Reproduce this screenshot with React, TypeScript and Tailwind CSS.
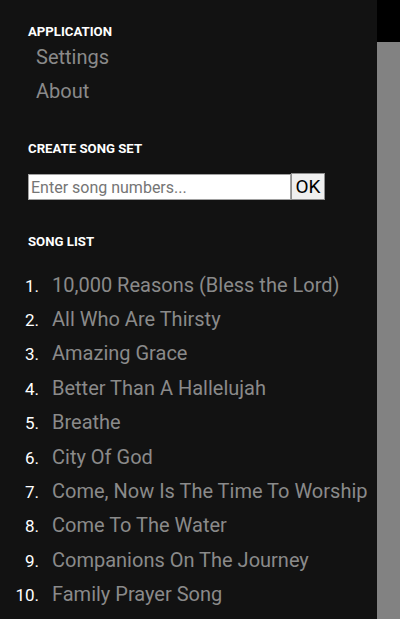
import React from 'react';

const songs = [
  '10,000 Reasons (Bless the Lord)',
  'All Who Are Thirsty',
  'Amazing Grace',
  'Better Than A Hallelujah',
  'Breathe',
  'City Of God',
  'Come, Now Is The Time To Worship',
  'Come To The Water',
  'Companions On The Journey',
  'Family Prayer Song',
];

function SectionTitle({ children }: { children: React.ReactNode }) {
  return <h2 className="text-[13.2px] leading-[16px] font-bold text-white uppercase">{children}</h2>;
}

export default function App() {
  return (
    <div className="flex h-[619px] w-[400px] overflow-hidden bg-black font-['Roboto',sans-serif]">
      {/* Drawer */}
      <aside className="w-[377px] h-full shrink-0 overflow-hidden bg-[#121212] pl-[28px] pt-[24px]">
        <SectionTitle>Application</SectionTitle>
        <nav className="pl-[8px] text-[20px] leading-[34px] text-[#8a8a8a]">
          <div>Settings</div>
          <div>About</div>
        </nav>

        <div className="mt-[33px]">
          <SectionTitle>Create Song Set</SectionTitle>
        </div>
        <div className="mt-[16px] flex items-end">
          <input
            type="text"
            placeholder="Enter song numbers..."
            className="w-[263px] h-[26px] bg-white border border-[#a0a0a0] px-[2px] text-[16px] text-black placeholder:text-[#757575] outline-none"
          />
          <button className="w-[34px] h-[27px] bg-[#efefef] border border-[#8f8f8f] text-[19px] leading-none text-black">
            OK
          </button>
        </div>

        <div className="mt-[34px]">
          <SectionTitle>Song List</SectionTitle>
        </div>
        <ol className="mt-[18px] -ml-[28px]">
          {songs.map((song, i) => (
            <li key={song} className="flex h-[34.4px] items-center">
              <div className="flex items-baseline leading-[22px]">
                <span className="w-[39px] shrink-0 text-right text-[17px] text-white">{i + 1}.</span>
                <span className="ml-[13px] whitespace-nowrap text-[20px] text-[#8a8a8a]">{song}</span>
              </div>
            </li>
          ))}
        </ol>
      </aside>

      {/* Page behind drawer */}
      <div className="flex flex-1 flex-col">
        <div className="h-[42px] bg-black" />
        <div className="flex-1 bg-[#828282]" />
      </div>
    </div>
  );
}
